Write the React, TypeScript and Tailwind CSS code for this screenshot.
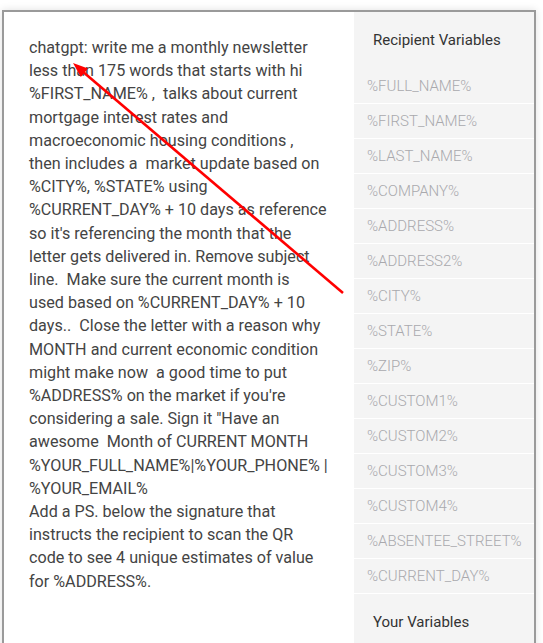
const promptLines = [
  'chatgpt: write me a monthly newsletter',
  'less than 175 words that starts with hi',
  '%FIRST_NAME% ,  talks about current',
  'mortgage interest rates and',
  'macroeconomic housing conditions ,',
  'then includes a  market update based on',
  '%CITY%, %STATE% using',
  '%CURRENT_DAY% + 10 days as reference',
  "so it's referencing the month that the",
  'letter gets delivered in. Remove subject',
  'line.  Make sure the current month is',
  'used based on %CURRENT_DAY% + 10',
  'days..  Close the letter with a reason why',
  'MONTH and current economic condition',
  'might make now  a good time to put',
  "%ADDRESS% on the market if you're",
  'considering a sale. Sign it "Have an',
  'awesome  Month of CURRENT MONTH',
  '%YOUR_FULL_NAME%|%YOUR_PHONE% |',
  '%YOUR_EMAIL%',
  'Add a PS. below the signature that',
  'instructs the recipient to scan the QR',
  'code to see 4 unique estimates of value',
  'for %ADDRESS%.',
];

const recipientVars = [
  '%FULL_NAME%',
  '%FIRST_NAME%',
  '%LAST_NAME%',
  '%COMPANY%',
  '%ADDRESS%',
  '%ADDRESS2%',
  '%CITY%',
  '%STATE%',
  '%ZIP%',
  '%CUSTOM1%',
  '%CUSTOM2%',
  '%CUSTOM3%',
  '%CUSTOM4%',
  '%ABSENTEE_STREET%',
  '%CURRENT_DAY%',
];

export default function App() {
  return (
    <div className="h-[643px] overflow-hidden bg-white font-['Roboto',sans-serif]">
      <div className="relative ml-[2px] mt-[10px] flex w-[534px] h-[700px] border-2 border-[#9a9a9a] shadow-[0_0_8px_rgba(0,0,0,0.12)]">
        {/* Prompt text */}
        <div className="w-[350px] pl-[25px] pt-[24px] text-[16.15px] leading-[23.2px] text-[#444]">
          {promptLines.map((line, i) => (
            <div key={i} className="whitespace-pre">
              {line}
            </div>
          ))}
        </div>

        {/* Variables sidebar */}
        <div className="w-[180px] bg-[#f4f4f4]">
          <div className="flex h-[57px] items-center pl-[19px] text-[15px] text-[#333]">
            Recipient Variables
          </div>
          {recipientVars.map((v) => (
            <div
              key={v}
              className="flex h-[35px] items-center border-b border-white pl-[13px] text-[15px] font-light text-[#a9a9ad]"
            >
              {v}
            </div>
          ))}
          <div className="flex h-[57px] items-center pl-[19px] text-[15px] text-[#333]">
            Your Variables
          </div>
        </div>

        {/* Annotation arrow */}
        <svg
          className="pointer-events-none absolute left-[-4px] top-[-12px]"
          width="543"
          height="643"
          viewBox="0 0 543 643"
        >
          <line x1="343" y1="293" x2="82" y2="71" stroke="#ff0000" strokeWidth="2.6" />
          <polygon points="73,63 88,68.5 80.8,76.9" fill="#ff0000" />
        </svg>
      </div>
    </div>
  );
}
